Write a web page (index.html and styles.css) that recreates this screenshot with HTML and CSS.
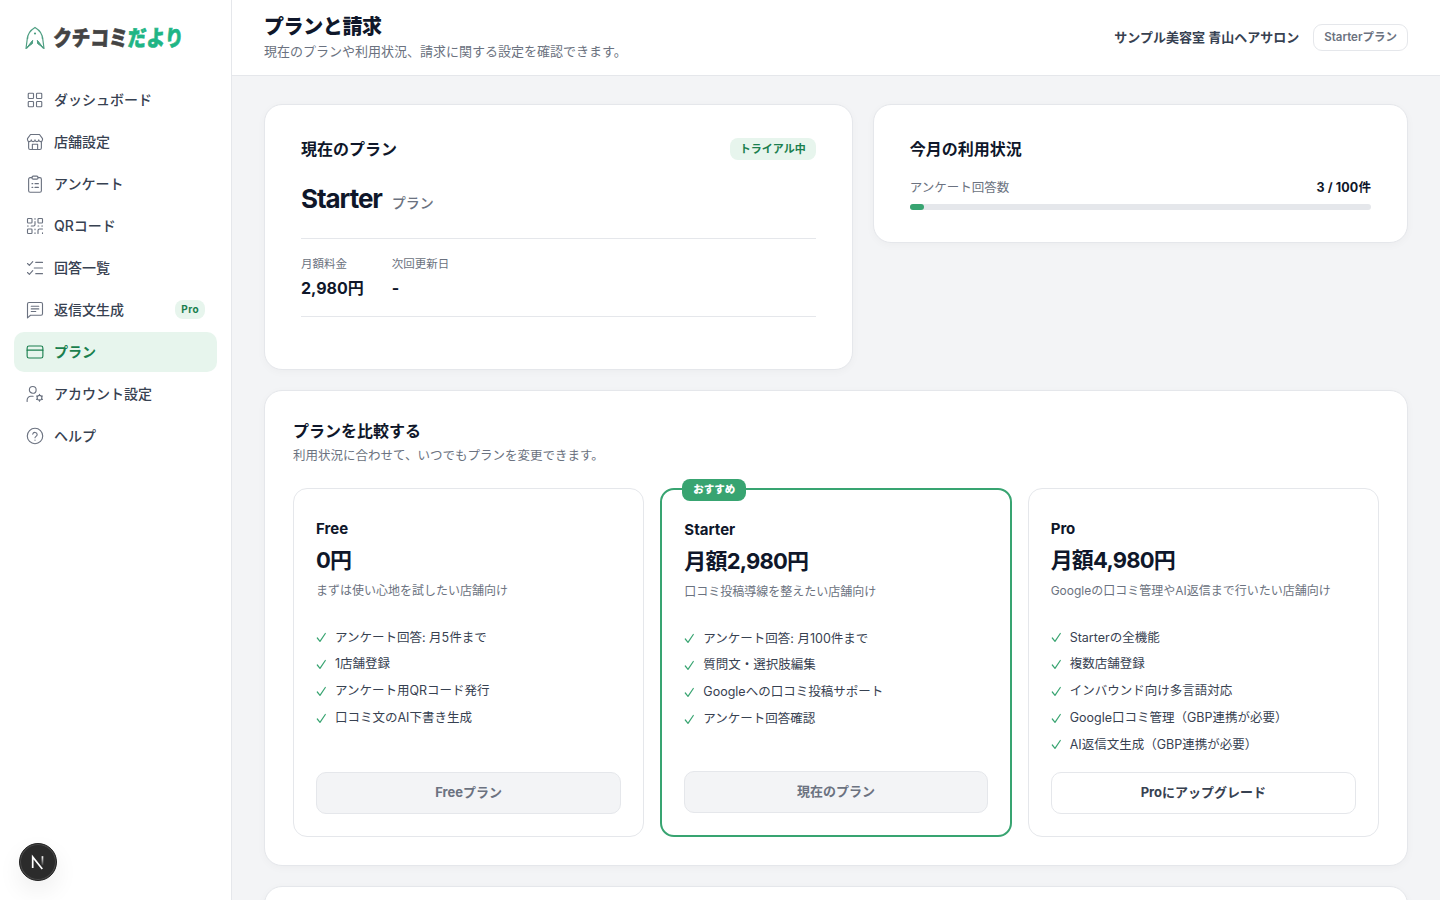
FILE: index.html
```html
<!DOCTYPE html>
<html lang="ja">
<head>
  <meta charset="UTF-8" />
  <meta name="viewport" content="width=device-width, initial-scale=1.0"/>
  <title>プランと請求 - クチコミだより</title>
  <link rel="stylesheet" href="styles.css">
</head>
<body>
  <div class="app">
    <aside class="sidebar">
      <a class="logo" href="#">
        <svg class="logo-mark" viewBox="0 0 20 24">
          <path d="M2.500 13C2.500 7.500 5 4.500 10 1.500c5 3 7.500 6 7.500 11.500" fill="none" stroke="#4f9f83" stroke-width="1.300" stroke-linejoin="round"/>
          <path d="M2.500 11L1 22.500l1.500-1L8 14.500M17.500 11L19 22.500l-1.500-1L12 14.500" fill="none" stroke="#4f9f83" stroke-width="1.200" stroke-linejoin="round"/>
          <path d="M7.500 14.500L2 21.500l5.500-4zM12.500 14.500l5.500 7-5.500-4z" fill="#4f9f83" stroke="#4f9f83" stroke-width="1" stroke-linejoin="round"/>
          <circle cx="10" cy="7.500" r="1.100" fill="#4f9f83"/>
        </svg>
        <span class="logo-text">クチコミ<em>だより</em></span>
      </a>
      <nav class="nav">
        <a class="nav-item" href="#">
          <svg class="icon" viewBox="0 0 24 24"><rect x="3" y="3" width="7" height="7" rx="1"/><rect x="14" y="3" width="7" height="7" rx="1"/><rect x="3" y="14" width="7" height="7" rx="1"/><rect x="14" y="14" width="7" height="7" rx="1"/></svg>
          ダッシュボード
        </a>
        <a class="nav-item" href="#">
          <svg class="icon" viewBox="0 0 24 24"><path d="M6 2h12l4 5.500v1.500a2.500 2.500 0 0 1-5 0 2.500 2.500 0 0 1-5 0 2.500 2.500 0 0 1-5 0 2.500 2.500 0 0 1-5 0V7.500z"/><path d="M3.500 11.500V20a2 2 0 0 0 2 2h13a2 2 0 0 0 2-2v-8.500"/><path d="M8.500 22v-7h7v7"/></svg>
          店舗設定
        </a>
        <a class="nav-item" href="#">
          <svg class="icon" viewBox="0 0 24 24"><path d="M8 3.500H5.500a2 2 0 0 0-2 2V21a2 2 0 0 0 2 2h13a2 2 0 0 0 2-2V5.500a2 2 0 0 0-2-2H16"/><rect x="8" y="1.500" width="8" height="4" rx="1.500"/><path d="M8 11.500h1M12 11.500h4.500M8 16.500h1M12 16.500h4.500"/></svg>
          アンケート
        </a>
        <a class="nav-item" href="#">
          <svg class="icon" viewBox="0 0 24 24"><rect x="2" y="2" width="6" height="6" rx="1"/><rect x="16" y="2" width="6" height="6" rx="1"/><rect x="2" y="16" width="6" height="6" rx="1"/><path d="M12 2v1M12 6v4a2 2 0 0 1-2 2H7M2 12h1M12 16v1M12 21v1M16 12h1M21 12h1M16 22v-4a2 2 0 0 1 2-2h4M22 21v1"/></svg>
          QRコード
        </a>
        <a class="nav-item" href="#">
          <svg class="icon" viewBox="0 0 24 24"><path d="M2 6l2.500 2.500L9 3.500M2 18l2.500 2.500L9 15.500M13 4.500h9M11 12h11M13 19.500h9"/></svg>
          回答一覧
        </a>
        <a class="nav-item" href="#">
          <svg class="icon" viewBox="0 0 24 24"><path d="M2 22.500V4a2 2 0 0 1 2-2h16a2 2 0 0 1 2 2v13a2 2 0 0 1-2 2H6z"/><path d="M7 7h10M7 10.500h10M7 14h6"/></svg>
          返信文生成
          <span class="nav-badge">Pro</span>
        </a>
        <a class="nav-item active" href="#">
          <svg class="icon" viewBox="0 0 24 24"><rect x="1.500" y="4" width="21" height="16" rx="2.500"/><path d="M1.500 9.500h21"/></svg>
          プラン
        </a>
        <a class="nav-item" href="#">
          <svg class="icon" viewBox="0 0 24 24"><circle cx="9" cy="6.500" r="4.500"/><path d="M1.500 22v-2a5 5 0 0 1 5-5h3"/><circle cx="18" cy="17" r="3.200"/><path d="M18 12.500v1.300M18 20.200v1.300M14.100 14.800l1.100.600M20.800 18.600l1.100.600M14.100 19.200l1.100-.600M20.800 15.400l1.100-.600"/></svg>
          アカウント設定
        </a>
        <a class="nav-item" href="#">
          <svg class="icon" viewBox="0 0 24 24"><circle cx="12" cy="12" r="10.300"/><path d="M9 9.500a3 3 0 0 1 5.900.8c0 2-2.900 2.300-2.900 4M12 17.300v.2"/></svg>
          ヘルプ
        </a>
      </nav>
    </aside>

    <div class="content">
      <header class="header">
        <div>
          <h1>プランと請求</h1>
          <p class="header-desc">現在のプランや利用状況、請求に関する設定を確認できます。</p>
        </div>
        <div class="header-right">
          <span class="store-name">サンプル美容室 青山ヘアサロン</span>
          <span class="plan-chip">Starterプラン</span>
        </div>
      </header>

      <main class="main">
        <div class="overview">
          <section class="card">
            <div class="card-head">
              <h2>現在のプラン</h2>
              <span class="status">トライアル中</span>
            </div>
            <div class="current-plan"><strong>Starter</strong><span>プラン</span></div>
            <dl class="stats">
              <div>
                <dt>月額料金</dt>
                <dd>2,980円</dd>
              </div>
              <div>
                <dt>次回更新日</dt>
                <dd>-</dd>
              </div>
            </dl>
          </section>

          <section class="card usage">
            <div class="card-head">
              <h2>今月の利用状況</h2>
            </div>
            <div class="usage-row"><span>アンケート回答数</span><strong>3 / 100件</strong></div>
            <div class="bar"><div class="bar-fill" style="width: 3%"></div></div>
          </section>
        </div>

        <section class="card compare">
          <h2>プランを比較する</h2>
          <p class="compare-desc">利用状況に合わせて、いつでもプランを変更できます。</p>
          <div class="plans">
            <article class="plan">
              <h3>Free</h3>
              <p class="price">0円</p>
              <p class="plan-desc">まずは使い心地を試したい店舗向け</p>
              <ul class="features">
                <li>アンケート回答: 月5件まで</li>
                <li>1店舗登録</li>
                <li>アンケート用QRコード発行</li>
                <li>口コミ文のAI下書き生成</li>
              </ul>
              <button class="btn" disabled>Freeプラン</button>
            </article>
            <article class="plan featured">
              <span class="ribbon">おすすめ</span>
              <h3>Starter</h3>
              <p class="price">月額2,980円</p>
              <p class="plan-desc">口コミ投稿導線を整えたい店舗向け</p>
              <ul class="features">
                <li>アンケート回答: 月100件まで</li>
                <li>質問文・選択肢編集</li>
                <li>Googleへの口コミ投稿サポート</li>
                <li>アンケート回答確認</li>
              </ul>
              <button class="btn" disabled>現在のプラン</button>
            </article>
            <article class="plan">
              <h3>Pro</h3>
              <p class="price">月額4,980円</p>
              <p class="plan-desc">Googleの口コミ管理やAI返信まで行いたい店舗向け</p>
              <ul class="features">
                <li>Starterの全機能</li>
                <li>複数店舗登録</li>
                <li>インバウンド向け多言語対応</li>
                <li>Google口コミ管理（GBP連携が必要）</li>
                <li>AI返信文生成（GBP連携が必要）</li>
              </ul>
              <button class="btn">Proにアップグレード</button>
            </article>
          </div>
        </section>

        <section class="card next-card"></section>
      </main>
    </div>
  </div>

  <div class="dev-badge">
    <svg viewBox="0 0 38 38">
      <defs>
        <linearGradient id="fade" x1="0" y1="0" x2="0" y2="1">
          <stop offset="0" stop-color="#fff"/>
          <stop offset="1" stop-color="#fff" stop-opacity="0.1"/>
        </linearGradient>
      </defs>
      <path d="M13.700 25V14l9.600 12" fill="none" stroke="#fff" stroke-width="1.700"/>
      <rect x="22.600" y="13.200" width="1.700" height="9" fill="url(#fade)"/>
    </svg>
  </div>

  <script>
    // チェックアイコンを各機能の先頭に追加
    document.querySelectorAll('.features li').forEach(li => {
      li.insertAdjacentHTML('afterbegin', '<svg class="check" viewBox="0 0 11 11"><path d="M1.300 6l2.700 3.300L9.300 1.500"/></svg>');
    });
  </script>
</body>
</html>
```
FILE: styles.css
```css
* {
  margin: 0;
  padding: 0;
  box-sizing: border-box;
}
body {
  font-family: Inter, "Noto Sans CJK JP", sans-serif;
  font-size: 14px;
  color: #374151;
  background: #f3f4f6;
  height: 100vh;
  overflow: hidden;
}
h1, h2, h3, .price, .current-plan strong, .stats dd, .usage-row strong {
  color: #0f172a;
}
.app {
  display: flex;
  height: 100vh;
}

/* サイドバー */
.sidebar {
  width: 232px;
  flex-shrink: 0;
  background: #fff;
  border-right: 1px solid #e5e7eb;
  padding: 22px 14px;
}
.logo {
  display: flex;
  align-items: center;
  gap: 8px;
  height: 32px;
  padding-left: 11px;
  margin-bottom: 26px;
  text-decoration: none;
}
.logo-mark {
  width: 20px;
  height: 24px;
}
.logo-text {
  font-size: 22px;
  font-weight: 900;
  line-height: 32px;
  color: #444;
  white-space: nowrap;
  -webkit-text-stroke: 0.6px currentColor;
  transform: scaleX(0.85) skewX(-3deg);
  transform-origin: left center;
}
.logo-text em {
  font-style: normal;
  color: #1fb585;
}
.nav {
  display: flex;
  flex-direction: column;
  gap: 2px;
}
.nav-item {
  display: flex;
  align-items: center;
  gap: 10px;
  height: 40px;
  padding: 0 12px 2px;
  border-radius: 10px;
  color: #374151;
  font-weight: 500;
  text-decoration: none;
}
.nav-item.active {
  background: #e7f5ed;
  color: #1a7f4e;
  font-weight: 700;
}
.icon {
  width: 18px;
  height: 18px;
  margin-top: 2px;
  fill: none;
  stroke: #6b7280;
  stroke-width: 1.5;
  stroke-linecap: round;
  stroke-linejoin: round;
}
.active .icon {
  stroke: #1a7f4e;
}
.nav-badge {
  margin-left: auto;
  padding: 0 6px;
  border-radius: 8px;
  background: #e7f5ed;
  color: #1a7f4e;
  font-size: 10px;
  font-weight: 700;
  line-height: 19px;
  letter-spacing: 0.4px;
}

/* ヘッダー */
.content {
  flex: 1;
  min-width: 0;
  height: 100vh;
  overflow: hidden;
}
.header {
  display: flex;
  align-items: center;
  justify-content: space-between;
  height: 76px;
  padding: 0 32px;
  background: #fff;
  border-bottom: 1px solid #e5e7eb;
}
h1 {
  font-size: 20px;
  font-weight: 800;
  line-height: 28px;
  letter-spacing: -0.4px;
}
.header-desc {
  font-size: 13px;
  line-height: 20px;
  padding-bottom: 2px;
  color: #6b7280;
}
.header-right {
  display: flex;
  align-items: center;
  gap: 14px;
}
.store-name {
  padding-bottom: 3px;
  font-size: 13px;
  font-weight: 600;
}
.plan-chip {
  padding: 0 10px;
  border: 1px solid #e5e7eb;
  border-radius: 9px;
  font-size: 11.5px;
  font-weight: 600;
  line-height: 25px;
  color: #6b7280;
}

/* カード */
.main {
  display: flex;
  flex-direction: column;
  gap: 20px;
  padding: 28px 32px;
}
.card {
  background: #fff;
  border: 1px solid #e5e7eb;
  border-radius: 18px;
  padding: 32px 36px;
  box-shadow: 0 2px 8px rgba(15, 23, 42, 0.03);
}
.overview {
  display: grid;
  grid-template-columns: 1.1fr 1fr;
  gap: 20px;
  align-items: start;
}
.card-head {
  display: flex;
  align-items: center;
  justify-content: space-between;
}
h2 {
  font-size: 16px;
  font-weight: 700;
  line-height: 24px;
}
.status {
  padding: 0 10px;
  border-radius: 8px;
  background: #e7f5ed;
  color: #1a7f4e;
  font-size: 11px;
  font-weight: 700;
  line-height: 22px;
}
.current-plan {
  display: flex;
  align-items: baseline;
  gap: 10px;
  height: 36px;
  line-height: 36px;
  margin: 20px 0 21px;
}
.current-plan strong {
  font-size: 26px;
  font-weight: 700;
  letter-spacing: -1.05px;
}
.current-plan span {
  font-weight: 500;
  color: #6b7280;
}
.stats {
  display: flex;
  gap: 28px;
  padding: 16px 0;
  margin-bottom: 20px;
  border-top: 1px solid #e5e7eb;
  border-bottom: 1px solid #e5e7eb;
}
.stats dt {
  font-size: 11.5px;
  line-height: 18px;
  color: #6b7280;
}
.stats dd {
  margin-top: 3px;
  font-size: 16px;
  font-weight: 700;
  line-height: 24px;
}
.usage-row {
  display: flex;
  justify-content: space-between;
  margin: 17px 0 7px;
  font-size: 12.5px;
  line-height: 19px;
  color: #6b7280;
}
.usage-row strong {
  font-weight: 700;
  letter-spacing: 0.1px;
}
.bar {
  height: 6px;
  border-radius: 3px;
  background: #e5e7eb;
}
.bar-fill {
  height: 6px;
  border-radius: 3px;
  background: #38a471;
}

/* プラン比較 */
.compare {
  padding: 28px;
}
.compare-desc {
  margin-top: 3px;
  font-size: 12.5px;
  line-height: 20px;
  color: #6b7280;
}
.plans {
  display: grid;
  grid-template-columns: repeat(3, 1fr);
  gap: 16px;
  margin-top: 22px;
}
.plan {
  position: relative;
  display: flex;
  flex-direction: column;
  height: 349px;
  padding: 28px 22px 22px;
  border: 1px solid #e5e7eb;
  border-radius: 14px;
}
.featured {
  border: 2px solid #38a471;
}
.ribbon {
  position: absolute;
  top: -11px;
  left: 20px;
  padding: 0 11px;
  border-radius: 8px;
  background: #38a471;
  color: #fff;
  font-size: 10.5px;
  font-weight: 900;
  line-height: 22px;
}
h3 {
  font-size: 15px;
  font-weight: 700;
  line-height: 24px;
}
.price {
  margin-top: 2px;
  font-size: 22px;
  font-weight: 700;
  line-height: 34px;
  letter-spacing: -0.8px;
}
.plan-desc {
  margin-top: 5px;
  font-size: 12px;
  line-height: 18px;
  color: #6b7280;
}
.features {
  display: flex;
  flex-direction: column;
  gap: 8px;
  margin-top: 28.5px;
  list-style: none;
}
.features li {
  display: flex;
  align-items: center;
  gap: 8px;
  font-size: 12.5px;
  line-height: 18.75px;
}
.check {
  width: 11px;
  height: 11px;
  fill: none;
  stroke: #38a471;
  stroke-width: 1.2;
  stroke-linecap: round;
  stroke-linejoin: round;
}
.btn {
  margin-top: auto;
  height: 42px;
  padding-bottom: 4px;
  border: 1px solid #e5e7eb;
  border-radius: 10px;
  background: #fff;
  font-family: inherit;
  font-size: 13px;
  font-weight: 700;
  color: #374151;
}
.btn:disabled {
  background: #f3f4f6;
  color: #6b7280;
}
.next-card {
  height: 120px;
}

/* 左下の開発用バッジ */
.dev-badge {
  position: fixed;
  left: 19px;
  bottom: 19px;
  width: 38px;
  height: 38px;
  border: 1px solid #222;
  border-radius: 50%;
  background: #2b2b2b;
  box-shadow: inset 0 0 0 1px #4a4a4a, 0 10px 24px rgba(0, 0, 0, 0.07);
}
.dev-badge svg {
  display: block;
  margin: -1px;
  width: 38px;
  height: 38px;
}
```
